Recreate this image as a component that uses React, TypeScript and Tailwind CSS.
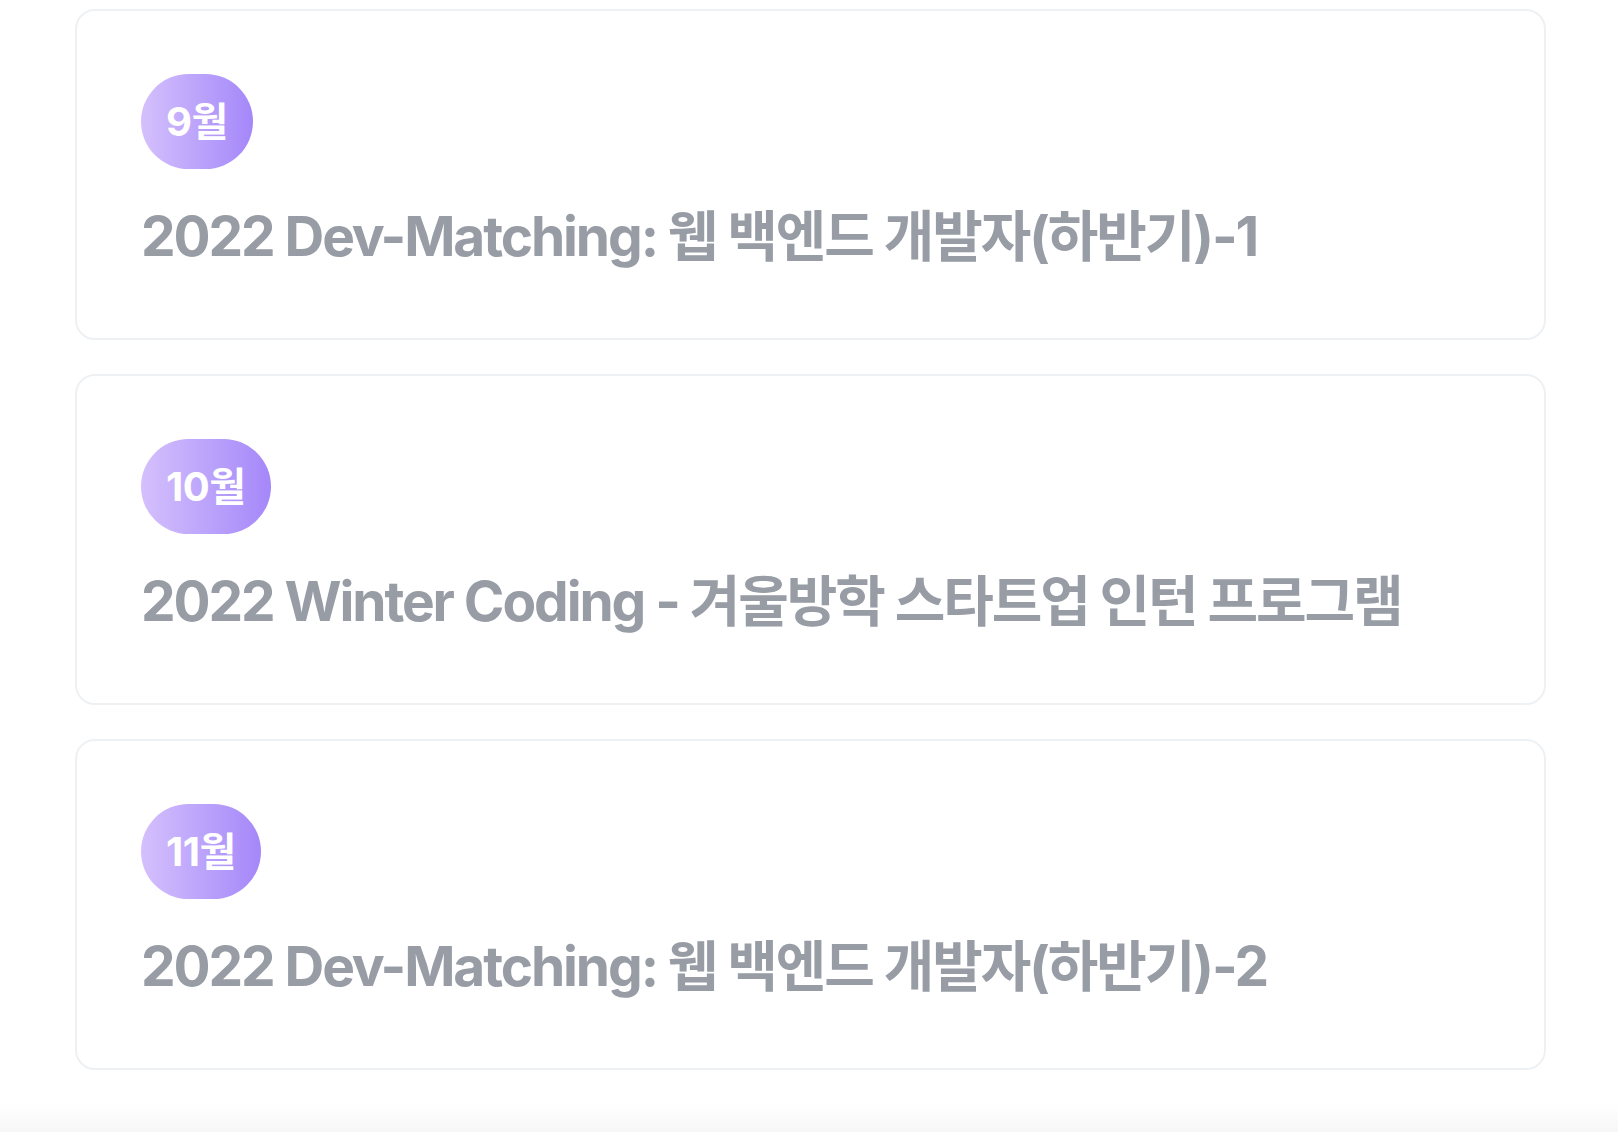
const events = [
  { month: "9월", title: "2022 Dev-Matching: 웹 백엔드 개발자(하반기)-1" },
  { month: "10월", title: "2022 Winter Coding - 겨울방학 스타트업 인턴 프로그램" },
  { month: "11월", title: "2022 Dev-Matching: 웹 백엔드 개발자(하반기)-2" },
]

export default function App() {
  return (
    <div
      className="min-h-[1132px] bg-white"
      style={{ fontFamily: "Inter, 'Noto Sans CJK KR', sans-serif" }}
    >
      <div className="flex flex-col gap-[34px] pt-[9px] pl-[75px] pr-[72px]">
        {events.map((e) => (
          <div
            key={e.title}
            className="flex flex-col items-start rounded-[20px] border-2 border-[#eef1f4] bg-white px-[64px] pt-[63px] pb-[64px]"
          >
            <span className="flex h-[95px] items-center rounded-full bg-linear-to-r from-[#d5c0fc] to-[#a587f9] px-[25px] text-[40px] font-bold tracking-[-0.5px] text-white">
              {e.month}
            </span>
            <h2 className="mt-[30px] text-[55px] leading-[75px] font-bold tracking-[-2.1px] text-[#979ca5]">
              {e.title}
            </h2>
          </div>
        ))}
      </div>
      <div className="mt-[34px] h-[30px] bg-linear-to-b from-white to-[#f6f6f6]" />
    </div>
  )
}
